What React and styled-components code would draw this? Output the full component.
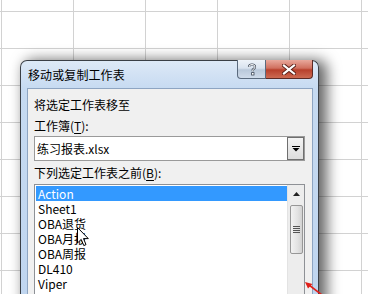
import React from 'react';
import styled, { createGlobalStyle } from 'styled-components';

const GlobalStyle = createGlobalStyle`
  html, body {
    margin: 0;
    padding: 0;
    overflow: hidden;
  }
  body {
    font-family: "Noto Sans CJK SC", "Noto Sans", sans-serif;
    font-size: 12px;
    color: #000;
  }
`;

const Sheet = styled.div`
  position: relative;
  width: 368px;
  height: 294px;
  overflow: hidden;
  box-sizing: border-box;
  padding: 60px 0 0 20px;
  background-color: #fff;
  background-image:
    linear-gradient(to right, #d2d2d2 1px, transparent 1px),
    linear-gradient(to bottom, #d2d2d2 1px, transparent 1px);
  background-size: 72px 37px;
  background-position: 1px 11px;
`;

const Window = styled.div`
  width: 299px;
  height: 260px;
  box-sizing: border-box;
  border: 1px solid #3a3f46;
  border-bottom: none;
  border-radius: 7px 7px 0 0;
  background: linear-gradient(to bottom, #dde9f7 0px, #c6daf1 28px, #bfd5ef 100%);
  box-shadow: 6px 2px 14px 2px rgba(0, 0, 0, 0.6);
  display: flex;
  flex-direction: column;
`;

const TitleBar = styled.div`
  height: 27px;
  display: flex;
  align-items: flex-start;
  padding-left: 7px;
  padding-right: 5px;
`;

const Title = styled.div`
  line-height: 27px;
  font-size: 12px;
  letter-spacing: 0.1px;
`;

const Controls = styled.div`
  margin-left: auto;
  margin-top: -1px;
  display: flex;
`;

const CaptionButton = styled.div`
  height: 19px;
  width: ${p => p.$w}px;
  box-sizing: border-box;
  border: 1px solid ${p => (p.$close ? '#5c2a25' : '#5a6a7e')};
  border-top: none;
  border-left: ${p => (p.$close ? 'none' : '')};
  border-radius: ${p => (p.$close ? '0 0 4px 0' : '0 0 0 4px')};
  background: ${p =>
    p.$close
      ? 'linear-gradient(to bottom, #e9a99c 0%, #d0705f 45%, #b8402c 55%, #cc6a52 100%)'
      : 'linear-gradient(to bottom, #eef3f9 0%, #d9e3ef 45%, #b9c8da 55%, #cfdbea 100%)'};
  display: flex;
  align-items: center;
  justify-content: center;
`;

const Client = styled.div`
  flex: 1;
  margin: 0 5px 0 6px;
  border: 1px solid #8ea5c2;
  border-bottom: none;
  background: #f0f0f0;
  padding: 8px 7px 0 6px;
`;

const Label = styled.div`
  height: 16px;
  line-height: 16px;
  margin-top: ${p => p.$mt || 0}px;
  white-space: nowrap;

  u {
    text-decoration: underline;
    text-underline-offset: 2px;
  }
`;

const Combo = styled.div`
  margin-top: 2px;
  height: 25px;
  box-sizing: border-box;
  border: 1px solid #9a9a9a;
  background: #fff;
  display: flex;
  align-items: stretch;
`;

const ComboText = styled.div`
  flex: 1;
  padding-left: 2px;
  line-height: 23px;
`;

const DropButton = styled.div`
  width: 17px;
  box-sizing: border-box;
  border: 1px solid #6f6f6f;
  background: linear-gradient(to bottom, #f4f4f4, #dcdcdc);
  display: flex;
  align-items: center;
  justify-content: center;
`;

const ListBox = styled.div`
  margin-top: 3px;
  height: 140px;
  box-sizing: border-box;
  border: 1px solid #8e9196;
  border-bottom: none;
  background: #fff;
  display: flex;
`;

const Items = styled.div`
  flex: 1;
  padding: 1px 0 0 1px;
`;

const Item = styled.div`
  height: 15px;
  line-height: 15px;
  padding-left: 2px;
  background: ${p => (p.$selected ? '#3399ff' : 'transparent')};
  color: ${p => (p.$selected ? '#fff' : '#000')};
  white-space: nowrap;
`;

const ScrollBar = styled.div`
  width: 16px;
  background: #ededed;
  border-left: 1px solid #e3e3e3;
  display: flex;
  flex-direction: column;
  align-items: center;
`;

const ScrollArrow = styled.div`
  height: 18px;
  width: 100%;
  display: flex;
  align-items: center;
  justify-content: center;
`;

const Thumb = styled.div`
  margin-top: 2px;
  width: 13px;
  height: 49px;
  box-sizing: border-box;
  border: 1px solid #979797;
  border-radius: 2px;
  background: linear-gradient(to right, #f2f2f2, #e2e2e2 60%, #d2d2d2);
  display: flex;
  flex-direction: column;
  align-items: center;
  justify-content: center;
  gap: 1px;
`;

const Grip = styled.div`
  width: 7px;
  height: 1px;
  background: #555;
`;

const Overlay = styled.svg`
  position: absolute;
  left: ${p => p.$x}px;
  top: ${p => p.$y}px;
  overflow: visible;
`;

const sheets = ['Action', 'Sheet1', 'OBA退货', 'OBA月报', 'OBA周报', 'DL410', 'Viper'];

export default function App() {
  return (
    <>
      <GlobalStyle />
      <Sheet>
        <Window>
          <TitleBar>
            <Title>移动或复制工作表</Title>
            <Controls>
              <CaptionButton $w={29}>
                <svg width="10" height="13" viewBox="0 0 10 13">
                  <path d="M2 4 Q2 1.5 5 1.5 Q8 1.5 8 4 Q8 5.6 5.8 6.6 L5.8 8.3" fill="none" stroke="#3b4656" strokeWidth="2.2" />
                  <path d="M2 4 Q2 1.5 5 1.5 Q8 1.5 8 4 Q8 5.6 5.8 6.6 L5.8 8.3" fill="none" stroke="#fff" strokeWidth="1" />
                  <rect x="4.6" y="9.6" width="2.4" height="2.4" fill="#fff" stroke="#3b4656" strokeWidth="0.8" />
                </svg>
              </CaptionButton>
              <CaptionButton $w={47} $close>
                <svg width="14" height="11" viewBox="0 0 14 11">
                  <path d="M2 1.5 L12 9.5 M12 1.5 L2 9.5" stroke="#5a2018" strokeWidth="4" strokeLinecap="square" />
                  <path d="M2 1.5 L12 9.5 M12 1.5 L2 9.5" stroke="#fff" strokeWidth="2.2" strokeLinecap="square" />
                </svg>
              </CaptionButton>
            </Controls>
          </TitleBar>
          <Client>
            <Label>将选定工作表移至</Label>
            <Label $mt={5}>工作簿(<u>T</u>):</Label>
            <Combo>
              <ComboText>练习报表.xlsx</ComboText>
              <DropButton>
                <svg width="8" height="6" viewBox="0 0 8 6">
                  <rect x="0" y="0" width="8" height="1" fill="#000" />
                  <path d="M0.5 2 L7.5 2 L4 5.5 Z" fill="#000" />
                </svg>
              </DropButton>
            </Combo>
            <Label $mt={4}>下列选定工作表之前(<u>B</u>):</Label>
            <ListBox>
              <Items>
                {sheets.map((s, i) => (
                  <Item key={s} $selected={i === 0}>{s}</Item>
                ))}
              </Items>
              <ScrollBar>
                <ScrollArrow>
                  <svg width="7" height="4" viewBox="0 0 7 4">
                    <path d="M0 4 L3.5 0 L7 4 Z" fill="#222" />
                  </svg>
                </ScrollArrow>
                <Thumb>
                  <Grip />
                  <Grip />
                  <Grip />
                  <Grip />
                </Thumb>
              </ScrollBar>
            </ListBox>
          </Client>
        </Window>

        <Overlay $x={77} $y={227} width="12" height="20" viewBox="0 0 12 20">
          <path d="M0.5 0.5 L0.5 16 L4.2 12.4 L6.8 18.6 L9 17.6 L6.5 11.6 L11.3 11.6 Z" fill="#fff" stroke="#000" strokeWidth="1" strokeLinejoin="round" />
        </Overlay>

        <Overlay $x={304} $y={281} width="20" height="14" viewBox="0 0 20 14">
          <path d="M5 4 L18 14" stroke="#e0201a" strokeWidth="1.6" />
          <path d="M1 1 L8.5 3 L4 7.5 Z" fill="#e0201a" />
        </Overlay>
      </Sheet>
    </>
  );
}
